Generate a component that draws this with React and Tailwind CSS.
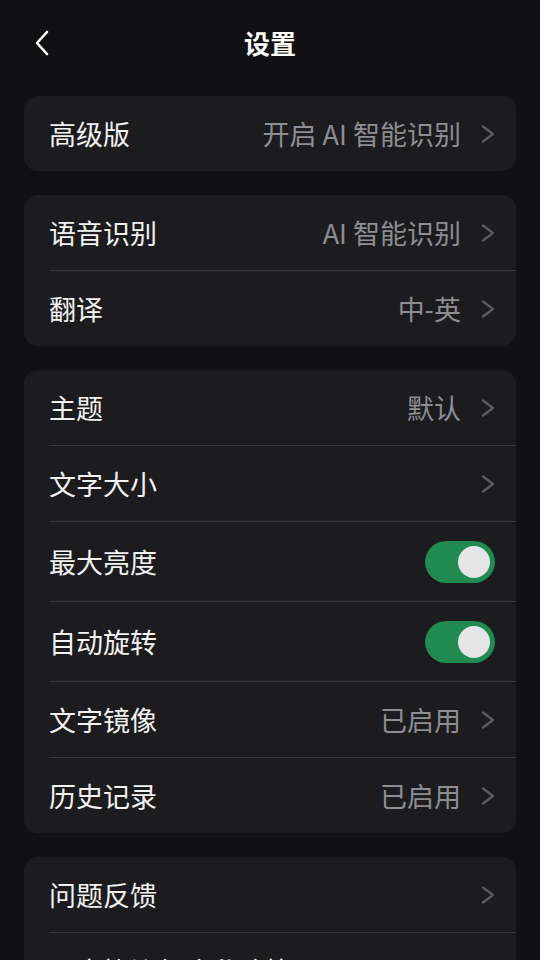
const font = {
  fontFamily: '"Noto Sans CJK SC", "Noto Sans", sans-serif',
};

const Chevron = () => (
  <svg width="14" height="18" viewBox="0 0 14 18" className="shrink-0">
    <polyline
      points="2,1.5 12,9 2,16.5"
      fill="none"
      stroke="#5b5b60"
      strokeWidth="2.2"
      strokeLinecap="round"
      strokeLinejoin="round"
    />
  </svg>
);

const Toggle = () => (
  <div className="w-[70px] h-[42px] rounded-full bg-[#218a51] flex items-center justify-end pr-[5px]">
    <div className="w-[32px] h-[32px] rounded-full bg-[#e6e6e6]" />
  </div>
);

const Row = ({ label, value, toggle, chevron = true, h = "h-[75px]" }) => (
  <div className={`flex items-center justify-between pl-[25px] pr-[21px] ${h}`}>
    <span className="text-[27px] text-[#f2f2f2] leading-none">{label}</span>
    {toggle ? (
      <Toggle />
    ) : (
      <div className="flex items-center gap-[20px]">
        {value && (
          <span className="text-[27px] text-[#8d8d92] leading-none">{value}</span>
        )}
        {chevron && <Chevron />}
      </div>
    )}
  </div>
);

const Sep = () => <div className="ml-[25px] h-px bg-[#3a3a3d]" />;

const Card = ({ rows }) => (
  <div className="bg-[#1c1c1e] rounded-[14px] overflow-hidden">
    {rows.map((r, i) => (
      <div key={r.label}>
        {i > 0 && <Sep />}
        <Row {...r} />
      </div>
    ))}
  </div>
);

export default function App() {
  return (
    <div
      style={font}
      className="w-[540px] h-[960px] overflow-hidden bg-[#111113] text-white"
    >
      <div className="relative h-[86px] flex items-center justify-center">
        <svg
          width="16"
          height="26"
          viewBox="0 0 16 26"
          className="absolute left-[34px] top-[30px]"
        >
          <polyline
            points="13,2 3,13 13,24"
            fill="none"
            stroke="#ffffff"
            strokeWidth="2.6"
            strokeLinecap="round"
            strokeLinejoin="round"
          />
        </svg>
        <h1 className="text-[26px] font-bold leading-none">设置</h1>
      </div>

      <div className="flex flex-col gap-6 px-6 pt-[10px]">
        <Card rows={[{ label: "高级版", value: "开启 AI 智能识别" }]} />
        <Card
          rows={[
            { label: "语音识别", value: "AI 智能识别" },
            { label: "翻译", value: "中-英" },
          ]}
        />
        <Card
          rows={[
            { label: "主题", value: "默认" },
            { label: "文字大小" },
            { label: "最大亮度", toggle: true, h: "h-[79px]" },
            { label: "自动旋转", toggle: true, h: "h-[79px]" },
            { label: "文字镜像", value: "已启用" },
            { label: "历史记录", value: "已启用" },
          ]}
        />
        <Card
          rows={[
            { label: "问题反馈" },
            { label: "用户协议与隐私政策" },
          ]}
        />
      </div>
    </div>
  );
}
